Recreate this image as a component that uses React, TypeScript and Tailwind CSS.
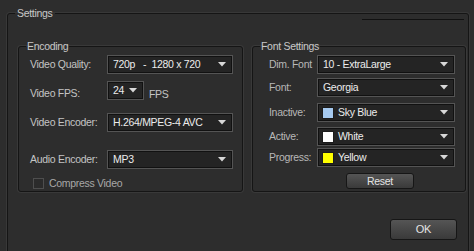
import React from "react";

const Arrow = () => (
  <svg width="8" height="5" viewBox="0 0 8 5" className="shrink-0">
    <polygon points="0,0 8,0 4,4.5" fill="#d8d8d8" />
  </svg>
);

type DDProps = { text: string; swatch?: string; className?: string; textClass?: string };

const Dropdown = ({ text, swatch, className = "", textClass = "" }: DDProps) => (
  <div
    className={`flex items-center justify-between border border-[#545454] bg-[#242424] shadow-[inset_0_0_0_1px_#111] pr-[6px] ${className}`}
  >
    <div className="flex items-center min-w-0">
      {swatch && (
        <span
          className="block ml-[4px] mr-[4px] w-[12px] h-[12px] border border-[#1c1c1c] shrink-0"
          style={{ backgroundColor: swatch }}
        />
      )}
      <span className={`text-[#ececec] whitespace-pre ${swatch ? "" : "pl-[5px]"} ${textClass}`}>{text}</span>
    </div>
    <Arrow />
  </div>
);

export default function App() {
  return (
    <div
      className="w-[474px] h-[251px] overflow-hidden bg-[#2d2d2d] text-[10.5px] leading-[13px] tracking-[-0.3px] text-[#c4c4c4]"
      style={{ fontFamily: '"Liberation Sans", Arial, sans-serif' }}
    >
      <fieldset className="ml-[7px] mt-[7px] w-[462px] h-[260px] border border-[#151515] rounded-[3px] shadow-[0_0_0_1px_#383838] px-0">
        <legend className="ml-[7px] px-[2px] text-[#c8c8c8]">Settings</legend>
        <div className="flex justify-end pr-[4px] -mt-px">
          <div className="w-[102px] h-px bg-[#111]" />
        </div>
        <div className="flex mt-[20px] ml-[10px] gap-[9px]">
          {/* Encoding */}
          <fieldset className="w-[225px] h-[152px] border border-[#151515] rounded-[3px] shadow-[0_0_0_1px_#393939] px-0">
            <legend className="ml-[7px] px-[1px] text-[#c8c8c8]">Encoding</legend>
            <div className="flex flex-col pl-[11px] pt-[2px]">
              <div className="flex items-center h-[19px]">
                <span className="w-[77px]">Video Quality:</span>
                <Dropdown text="720p   -  1280 x 720" className="w-[126px] h-[19px]" />
              </div>
              <div className="flex items-center h-[19px] mt-[7px]">
                <span className="w-[77px] pt-[6px]">Video FPS:</span>
                <Dropdown text="24" className="w-[37px] h-[19px]" textClass="pr-[4px]" />
                <span className="ml-[5px] pt-[8px]">FPS</span>
              </div>
              <div className="flex items-center h-[19px] mt-[13px]">
                <span className="w-[77px]">Video Encoder:</span>
                <Dropdown text="H.264/MPEG-4 AVC" className="w-[126px] h-[19px]" textClass="pl-[3px]" />
              </div>
              <div className="flex items-center h-[19px] mt-[18px]">
                <span className="w-[77px]">Audio Encoder:</span>
                <Dropdown text="MP3" className="w-[126px] h-[19px]" textClass="pl-[4px]" />
              </div>
              <div className="flex items-center h-[11px] mt-[9px] pl-[3px]">
                <span className="block w-[11px] h-[11px] border border-[#4e4e4e] bg-[#2b2b2b] shrink-0" />
                <span className="ml-[5px] text-[#a8a8a8]">Compress Video</span>
              </div>
            </div>
          </fieldset>
          {/* Font Settings */}
          <fieldset className="w-[214px] h-[152px] border border-[#151515] rounded-[3px] shadow-[0_0_0_1px_#393939] px-0">
            <legend className="ml-[7px] px-[1px] text-[#c8c8c8]">Font Settings</legend>
            <div className="flex flex-col pl-[16px] pt-[2px]">
              <div className="flex items-center h-[19px]">
                <span className="w-[48px] text-[#b8b8b8]">Dim. Font</span>
                <Dropdown text="10 - ExtraLarge" className="w-[138px] h-[19px]" textClass="pl-[4px]" />
              </div>
              <div className="flex items-center h-[19px] mt-[4px]">
                <span className="w-[48px] text-[#b8b8b8]">Font:</span>
                <Dropdown text="Georgia" className="w-[138px] h-[19px]" textClass="pl-[4px]" />
              </div>
              <div className="flex items-center h-[19px] mt-[6px]">
                <span className="w-[48px] text-[#b8b8b8]">Inactive:</span>
                <Dropdown text="Sky Blue" swatch="#a6caf0" className="w-[138px] h-[19px]" />
              </div>
              <div className="flex items-center h-[19px] mt-[5px]">
                <span className="w-[48px] text-[#b8b8b8]">Active:</span>
                <Dropdown text="White" swatch="#ffffff" className="w-[138px] h-[19px]" />
              </div>
              <div className="flex items-center h-[19px] mt-[2px]">
                <span className="w-[48px] text-[#b8b8b8]">Progress:</span>
                <Dropdown text="Yellow" swatch="#ffff00" className="w-[138px] h-[19px]" />
              </div>
              <div className="flex mt-[6px] pl-[77px]">
                <button className="w-[68px] h-[16px] rounded-[3px] border border-[#161616] bg-gradient-to-b from-[#555] to-[#3a3a3a] text-[#e4e4e4] text-[10.5px] leading-[13px]">
                  Reset
                </button>
              </div>
            </div>
          </fieldset>
        </div>
        <div className="flex justify-end pr-[11px] mt-[27px]">
          <button className="w-[67px] h-[21px] rounded-[3px] border border-[#161616] bg-gradient-to-b from-[#555] to-[#3a3a3a] text-[#e4e4e4] text-[11px] leading-[13px]">
            OK
          </button>
        </div>
      </fieldset>
    </div>
  );
}
